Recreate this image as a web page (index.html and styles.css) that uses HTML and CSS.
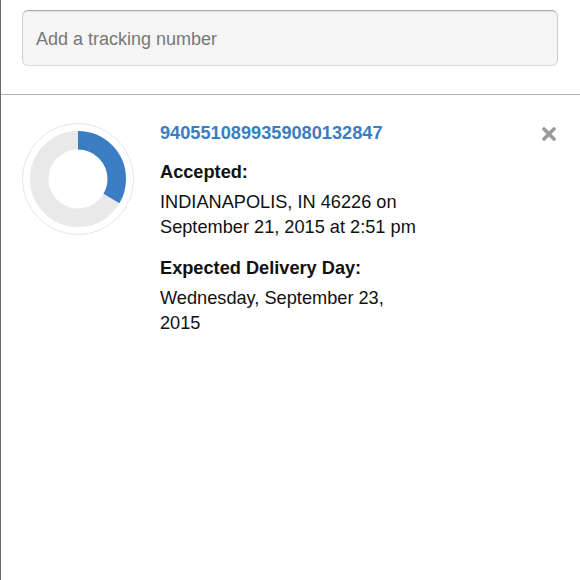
FILE: index.html
```html
<!DOCTYPE html>
<html lang="en">
<head>
    <meta charset="UTF-8">
    <meta name="viewport" content="width=device-width, initial-scale=1.0">
    <title>Tracking</title>
    <link rel="stylesheet" href="styles.css">
</head>
<body>
    <div class="search">
        <input type="text" class="search-input" placeholder="Add a tracking number">
    </div>
    <div class="package">
        <div class="progress">
            <svg width="112" height="112" viewBox="0 0 112 112">
                <circle cx="56" cy="56" r="55.5" fill="none" stroke="#e6e6e6" stroke-width="1"/>
                <circle cx="56" cy="56" r="38.75" fill="none" stroke="#e9e9e9" stroke-width="18.5"/>
                <circle cx="56" cy="56" r="38.75" fill="none" stroke="#3a7dc3" stroke-width="18.5"
                        stroke-dasharray="81.2 243.5" transform="rotate(-90 56 56)"/>
            </svg>
        </div>
        <div class="details">
            <a href="#" class="tracking-number">9405510899359080132847</a>
            <h4>Accepted:</h4>
            <p>INDIANAPOLIS, IN 46226 on<br>September 21, 2015 at 2:51 pm</p>
            <h4>Expected Delivery Day:</h4>
            <p>Wednesday, September 23,<br>2015</p>
        </div>
        <a href="#" class="remove" title="Remove">
            <svg width="14" height="14" viewBox="0 0 14 14">
                <path d="M2 2 L12 12 M12 2 L2 12" stroke="#9b9b9b" stroke-width="3.6" stroke-linecap="round"/>
            </svg>
        </a>
    </div>
</body>
</html>
```

FILE: styles.css
```css
html, body { height: 100%; }
body { margin: 0; font-family: "Liberation Sans", Arial, sans-serif; color: #111; background: #fff; border-left: 1px solid #6a6a6a; box-sizing: border-box; }
.search { padding: 10px 22px 28px 21px; border-bottom: 1px solid #b4b4b4; }
.search-input { display: block; width: 100%; height: 56px; box-sizing: border-box; padding: 2px 13px 0; font-family: "Liberation Sans", Arial, sans-serif; font-size: 18px; color: #333; background: #f5f5f5; border: 1px solid #dadada; border-top-color: #ababab; border-left-color: #cfcfcf; border-right-color: #cfcfcf; border-radius: 6px; box-shadow: inset 0 1px 1px rgba(0,0,0,0.08); outline: none; }
.search-input::placeholder { color: #777; }
.package { display: flex; align-items: flex-start; padding: 26px 24px 0 21px; }
.progress { width: 112px; height: 112px; margin-top: 2px; flex-shrink: 0; }
.progress svg { display: block; }
.details { flex: 1; margin-left: 26px; font-size: 18.2px; line-height: 25px; }
.tracking-number { display: block; color: #3b7dc1; font-weight: bold; text-decoration: none; margin-bottom: 14px; }
.details h4 { margin: 0 0 5px; font-size: 18.2px; font-weight: bold; }
.details p { margin: 0 0 16px; }
.remove { display: block; width: 14px; height: 14px; margin-top: 6px; }
.remove svg { display: block; }
```
